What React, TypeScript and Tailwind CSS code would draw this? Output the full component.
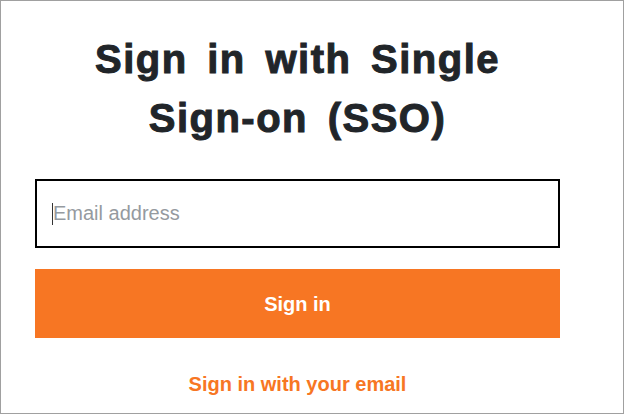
export default function App() {
  return (
    <div className="h-[414px] w-[624px] overflow-hidden border border-[#a0a0a0] bg-white font-['Liberation_Sans',Arial,sans-serif]">
      <div className="ml-[34px] flex w-[525px] flex-col">
        <h1 className="mt-[29px] text-center text-[40px] font-bold leading-[59px] tracking-[1.5px] [word-spacing:7px] text-[#212529] [-webkit-text-stroke:1px_#212529]">
          Sign in with Single
          <br />
          Sign-on (SSO)
        </h1>
        <div className="relative mt-[31px]">
          <input
            type="email"
            placeholder="Email address"
            className="h-[69px] w-full border-2 border-black px-4 text-[20px] text-[#212529] caret-transparent outline-none placeholder:text-[#959aa0]"
          />
          <span className="pointer-events-none absolute left-[17px] top-[24px] h-[22px] w-px bg-[#333]" />
        </div>
        <button className="mt-[21px] h-[69px] w-full bg-[#f77623] text-[20px] font-bold text-white">
          Sign in
        </button>
        <a className="mt-[34px] text-center text-[20px] font-bold leading-[24px] text-[#f77623]">
          Sign in with your email
        </a>
      </div>
    </div>
  );
}
